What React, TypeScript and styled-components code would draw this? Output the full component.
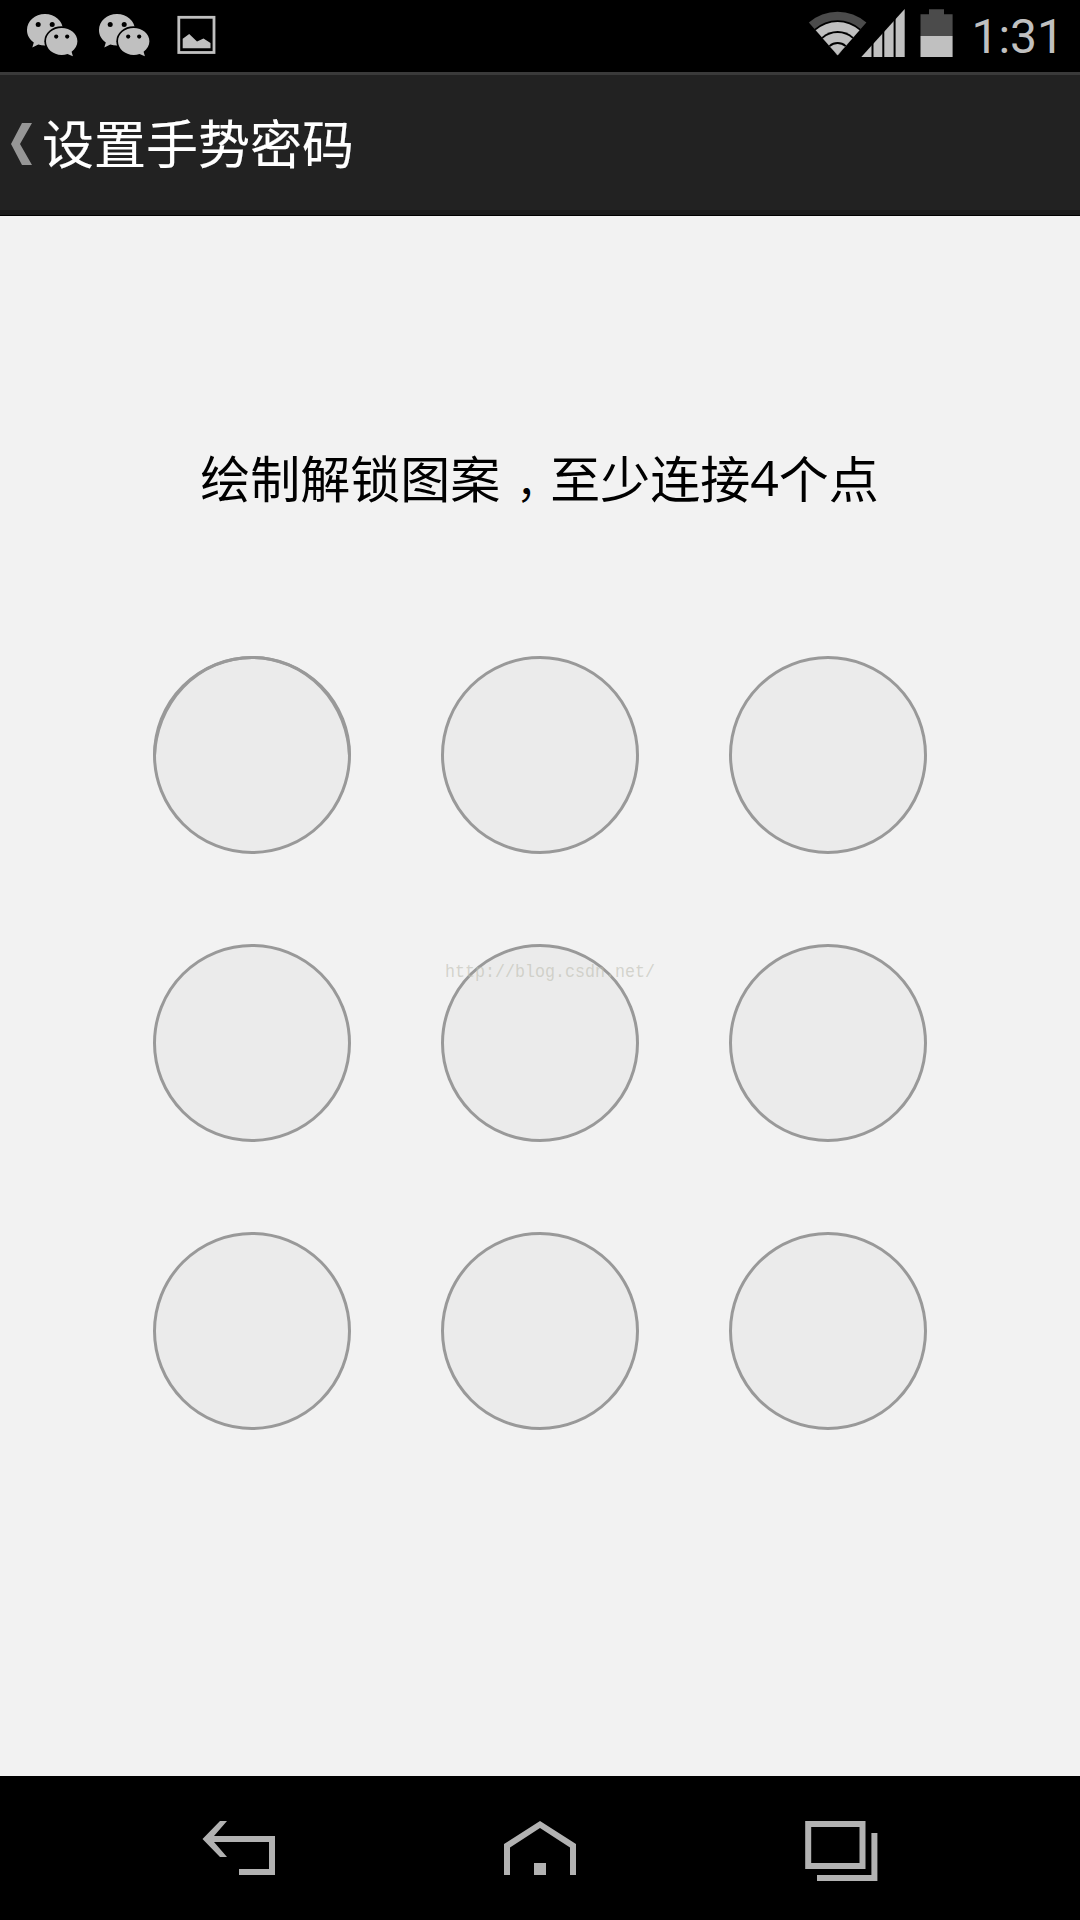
import React from "react";
import styled, { createGlobalStyle, css } from "styled-components";

const GlobalStyle = createGlobalStyle`
  html, body { margin: 0; padding: 0; background: #f2f2f2; }
  *, *::before, *::after { box-sizing: border-box; }
  svg { display: block; }
`;

const Screen = styled.div`
  display: flex;
  flex-direction: column;
  width: 1080px;
  height: 1920px;
  overflow: hidden;
  background: #f2f2f2;
  font-family: "Open Sans", "Noto Sans CJK SC", sans-serif;
`;

const StatusBar = styled.header`
  display: flex;
  flex: none;
  justify-content: space-between;
  height: 72px;
  padding: 0 16px 0 24px;
  background: #000;
`;

const Notifications = styled.div`
  display: flex;
  gap: 16px;
`;

const Indicators = styled.div`
  display: flex;
`;

const Clock = styled.time`
  margin-left: 18px;
  padding-top: 1px;
  color: #c0c0c0;
  font: 400 48px/72px Roboto, sans-serif;
`;

const ActionBar = styled.div`
  display: flex;
  flex: none;
  align-items: center;
  height: 144px;
  padding-left: 11px;
  background: #222;
  border-top: 3px solid #3a3a3a;
  border-bottom: 1px solid #000;
  box-shadow: inset 0 -5px 0 #1b1b1b;
`;

const Title = styled.h1`
  margin: 0 0 3px 9px;
  color: #fff;
  font-size: 52px;
  font-weight: 400;
  line-height: 72px;
  -webkit-text-stroke: 0.15px #fff;
`;

const Content = styled.main`
  display: flex;
  flex: 1;
  flex-direction: column;
  align-items: center;
  padding-top: 228px;
`;

const Prompt = styled.p`
  margin: 0 1px 142px 0;
  color: #000;
  font-size: 50px;
  line-height: 70px;
  white-space: nowrap;
`;

const Comma = styled.span`
  display: inline-block;
  width: 50px;
  padding-left: 16px;
  font-size: 42px;
  line-height: 50px;
  font-feature-settings: "halt";
`;

const Digit = styled.span`
  position: relative;
  top: -2px;
`;

const PatternGrid = styled.div`
  position: relative;
  display: grid;
  grid-template-columns: repeat(3, 198px);
  grid-auto-rows: 198px;
  gap: 90px;
`;

const ring = css`
  border: 3px solid #999;
  border-radius: 50%;
`;

const Dot = styled.div<{ $heavy?: boolean }>`
  ${ring}
  background: #ebebeb;
  ${(p) =>
    p.$heavy &&
    css`
      &::after {
        content: "";
        display: block;
        width: 198px;
        height: 198px;
        margin: -3px;
        ${ring}
        border-radius: 99px 99px 95px 95px / 103px 103px 95px 95px;
        clip-path: inset(0 0 50% 0);
      }
    `}
`;

const Watermark = styled.span`
  position: absolute;
  left: 292px;
  top: 306px;
  color: rgba(190, 190, 178, 0.6);
  font: 16.67px/20px "Liberation Mono", monospace;
  transform: scaleY(1.15);
`;

const NavBar = styled.nav`
  display: flex;
  flex: none;
  justify-content: center;
  height: 144px;
  background: #000;
`;

const NavButton = styled.button`
  display: flex;
  justify-content: center;
  width: 301px;
  padding: 0;
  border: 0;
  background: none;
`;

const WeChat = () => (
  <svg width="56" height="72" viewBox="24 0 56 72" fill="#c0c0c0">
    <path d="M45 14C34.800 14 27 21 27 30c0 5.200 2.500 9.500 6.800 12.500L32.300 47.500l6-3c2.200.7 4.400 1 6.700 1 10 0 18-6.800 18-15.500S55 14 45 14z" />
    <ellipse cx="61.500" cy="41.300" rx="17.200" ry="15" fill="#000" />
    <path d="M61.700 28C53 28 46 33.800 46 41.300S53 55 61.700 55c2 0 4-.4 5.800-.9l5.400 2.200-1.300-4.600C75.200 49.200 77.400 45.500 77.400 41.300 77.400 33.800 70.300 28 61.700 28z" />
    <g fill="#000">
      <circle cx="38.200" cy="24.500" r="2.500" />
      <circle cx="52.200" cy="24.500" r="2.500" />
      <circle cx="56.200" cy="36.600" r="2.100" />
      <circle cx="67.200" cy="36.600" r="2.100" />
    </g>
  </svg>
);

const Picture = () => (
  <svg width="48" height="72" viewBox="168 0 48 72" fill="#c0c0c0">
    <rect x="178.800" y="17.300" width="35.200" height="35.200" fill="none" stroke="#c0c0c0" strokeWidth="2.800" />
    <path d="M182.700 48.200V38.800l6.500-4.800 7.800 7.500 6.500-3.100 7 4.500v5.300z" />
  </svg>
);

const sector = (r: number) => {
  const x = r * 0.66;
  const y = r * 0.751;
  return `M837.600 55.300L${837.6 - x} ${55.3 - y}A${r} ${r} 0 0 1 ${837.6 + x} ${55.3 - y}z`;
};

const WIFI: [number, string][] = [
  [43.6, "#4b4b4b"],
  [35, "#000"],
  [33.2, "#c0c0c0"],
  [24.2, "#000"],
  [22.3, "#c0c0c0"],
  [13.2, "#000"],
  [11.3, "#c0c0c0"],
];

const Wifi = () => (
  <svg width="60" height="72" viewBox="808 0 60 72">
    {WIFI.map(([r, fill]) => (
      <path key={r} d={sector(r)} fill={fill} />
    ))}
  </svg>
);

const SignalIcon = styled.svg`
  margin-left: -7px;
`;

const Signal = () => (
  <SignalIcon width="45" height="72" viewBox="861 0 45 72">
    <path d="M861.300 57L904.700 9V57z" fill="#c0c0c0" />
    <path d="M872.500 9V57M883.300 9V57M894.600 9V57" stroke="#000" strokeWidth="2" />
  </SignalIcon>
);

const Battery = () => (
  <svg width="47" height="72" viewBox="906 0 47 72">
    <path d="M920.500 36V14.300H929V9.300h15v5h8.600V36z" fill="#4b4b4b" />
    <path d="M920.500 36h32.100v21h-32.100z" fill="#c0c0c0" />
  </svg>
);

const ChevronIcon = styled.svg`
  margin-bottom: 2px;
`;

const UpChevron = () => (
  <ChevronIcon width="22" height="42" viewBox="0 0 22 42">
    <path d="M0 21L11 0H21L9 21L21 42H11z" fill="#969696" />
  </ChevronIcon>
);

const BackIcon = () => (
  <svg width="100" height="144" viewBox="0 0 100 144" fill="#b2b2b2">
    <path d="M13.500 63L31 45h7L25 60H86V99H50V93H80V66H25L38 81h-7z" />
  </svg>
);

const HomeIcon = () => (
  <svg width="100" height="144" viewBox="0 0 100 144" fill="#b2b2b2">
    <path d="M14 99V68L50 45 86 68V99H80V71.500L50 52 20 71.500V99z" />
    <path d="M44 87H56V99H44z" />
  </svg>
);

const RecentIcon = () => (
  <svg width="100" height="144" viewBox="0 0 100 144" fill="none" stroke="#b2b2b2" strokeWidth="6">
    <path d="M17.200 48H71.500V90H17.200z" />
    <path d="M83.400 57V102H26" />
  </svg>
);

export default function App() {
  return (
    <Screen>
      <GlobalStyle />
      <StatusBar>
        <Notifications>
          <WeChat />
          <WeChat />
          <Picture />
        </Notifications>
        <Indicators>
          <Wifi />
          <Signal />
          <Battery />
          <Clock>1:31</Clock>
        </Indicators>
      </StatusBar>
      <ActionBar>
        <UpChevron />
        <Title>设置手势密码</Title>
      </ActionBar>
      <Content>
        <Prompt>
          绘制解锁图案<Comma>，</Comma>至少连接<Digit>4</Digit>个点
        </Prompt>
        <PatternGrid>
          {Array.from({ length: 9 }, (_, i) => (
            <Dot key={i} $heavy={i === 0} />
          ))}
          <Watermark>http://blog.csdn.net/</Watermark>
        </PatternGrid>
      </Content>
      <NavBar>
        <NavButton aria-label="返回">
          <BackIcon />
        </NavButton>
        <NavButton aria-label="主页">
          <HomeIcon />
        </NavButton>
        <NavButton aria-label="最近">
          <RecentIcon />
        </NavButton>
      </NavBar>
    </Screen>
  );
}
